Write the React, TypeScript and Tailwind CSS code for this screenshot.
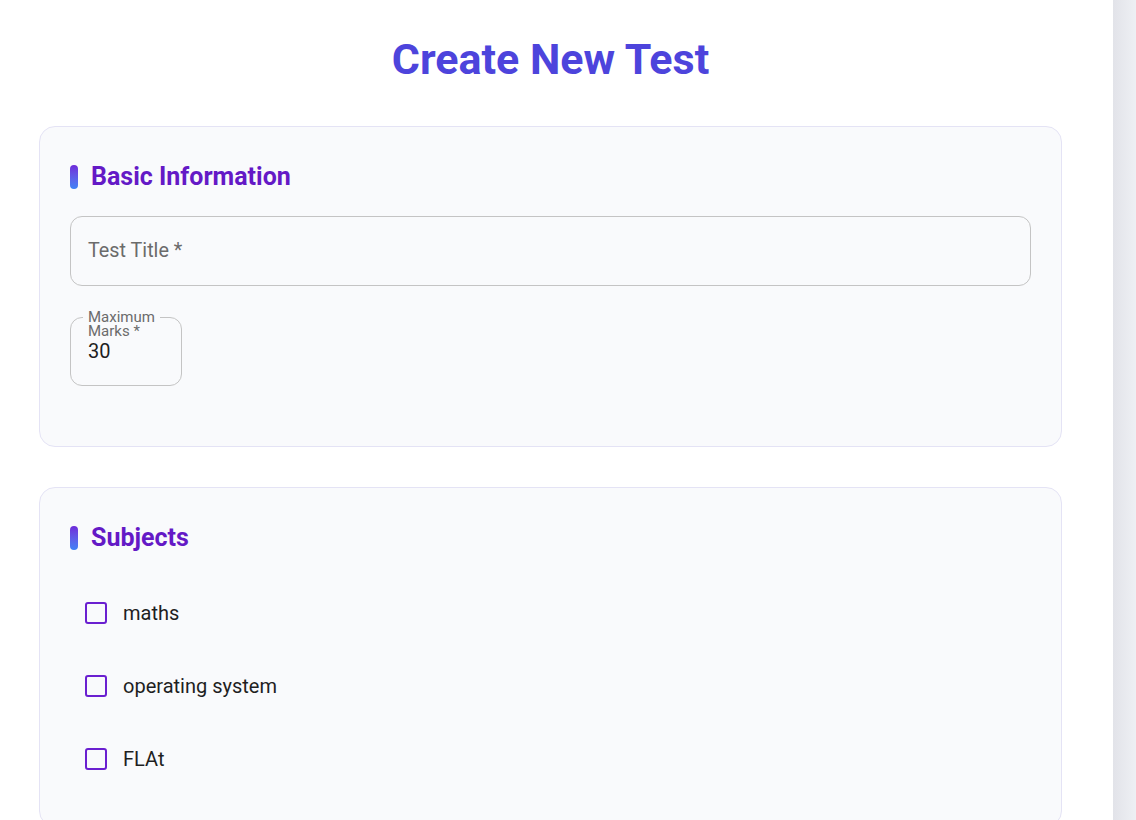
import React from "react";

const subjects = ["maths", "operating system", "FLAt"];

const SectionTitle: React.FC<{ label: string }> = ({ label }) => (
    <div className="flex items-center gap-[13px]">
        <span className="w-[8px] h-[24px] rounded-full bg-gradient-to-b from-[#6d28d9] to-[#3b82f6]" />
        <h2 className="text-[25px] font-bold text-[#6419c6] leading-none">{label}</h2>
    </div>
);

export default function App() {
    return (
        <div className="flex min-h-[820px] bg-white" style={{ fontFamily: "Roboto, 'Liberation Sans', sans-serif" }}>
            <div className="w-[1113px] shrink-0 pl-[39px] pr-[51px]">
                <h1 className="pt-[31px] pb-[39px] text-center text-[43px] font-bold leading-[56px] text-[#4d44dc]">
                    Create New Test
                </h1>

                {/* Basic information */}
                <div className="rounded-[16px] border border-[#e4e3f5] bg-[#f9fafc] px-[30px] pt-[37px] pb-[60px]">
                    <SectionTitle label="Basic Information" />
                    <div className="mt-[27px] h-[70px] rounded-[12px] border border-[#c4c4c4] flex items-center px-[17px]">
                        <span className="text-[19.8px] text-[#6b6b6b]">Test Title *</span>
                    </div>
                    <div className="relative mt-[31px] w-[112px] h-[69px] rounded-[12px] border border-[#c4c4c4]">
                        <span className="absolute left-[12px] top-[-8px] bg-[#f9fafc] px-[5px] text-[15px] leading-[14px] text-[#6b6b6b]">
                            Maximum
                            <br />
                            Marks *
                        </span>
                        <span className="absolute left-[17px] top-[23px] text-[20px] leading-[20px] text-[#1f1f1f]">30</span>
                    </div>
                </div>

                {/* Subjects */}
                <div className="mt-[40px] rounded-[16px] border border-[#e4e3f5] bg-[#f9fafc] px-[30px] pt-[37px] pb-[40px] min-h-[340px]">
                    <SectionTitle label="Subjects" />
                    <div className="mt-[52px] flex flex-col gap-[51px] pl-[15px]">
                        {subjects.map((s) => (
                            <label key={s} className="flex items-center gap-[16px] h-[22px]">
                                <span className="w-[22px] h-[22px] rounded-[3px] border-2 border-[#6a1fd0]" />
                                <span className="text-[20px] text-[#1f1f1f]">{s}</span>
                            </label>
                        ))}
                    </div>
                </div>
            </div>
            <div className="flex-1 bg-gradient-to-r from-[#e2e3e9] to-[#eef0f4]" />
        </div>
    );
}
